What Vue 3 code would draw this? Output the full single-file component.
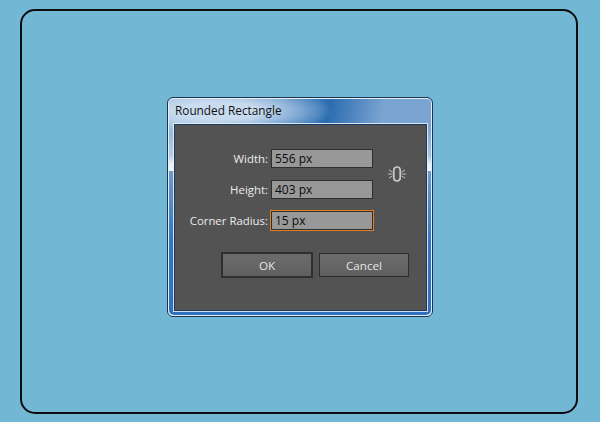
<script setup>
const fields = [
  { label: 'Width:', value: '556 px', active: false },
  { label: 'Height:', value: '403 px', active: false },
  { label: 'Corner Radius:', value: '15 px', active: true },
]
</script>

<template>
  <div class="page">
    <div class="artboard">
      <div class="dialog">
        <div class="title">Rounded Rectangle</div>
        <div class="panel">
          <div class="form">
            <div class="rows">
              <div v-for="f in fields" :key="f.label" class="row">
                <span class="label">{{ f.label }}</span>
                <span class="input" :class="{ active: f.active }">{{ f.value }}</span>
              </div>
            </div>
            <svg class="link" width="18" height="16" viewBox="0 0 18 16" fill="none">
              <rect x="5.8" y="1" width="6.4" height="14" rx="3.2" stroke="#c8c8c8" stroke-width="1.7" />
              <path d="M0 8h4.5M13.5 8h4.5M1 4l3.5 2M17 4l-3.5 2M1 12l3.5-2M17 12l-3.5-2" stroke="#c0c0c0" stroke-width="1" />
            </svg>
          </div>
          <div class="buttons">
            <button class="btn ok">OK</button>
            <button class="btn cancel">Cancel</button>
          </div>
        </div>
      </div>
    </div>
  </div>
</template>

<style>
html, body { margin: 0; background: #72b8d4; }
</style>

<style scoped>
.page {
  width: 600px;
  height: 422px;
  box-sizing: border-box;
  padding: 9px 22px 8px 20px;
  background: #72b8d4;
  font-family: "Open Sans", "Liberation Sans", sans-serif;
  overflow: hidden;
}
.artboard {
  box-sizing: border-box;
  height: 405px;
  border: 2px solid #0d0d10;
  border-radius: 15px;
  padding: 86px 0 0 145px;
}
.dialog {
  box-sizing: border-box;
  width: 266px;
  height: 220px;
  border: 1px solid #1b3550;
  border-radius: 6px;
  padding: 26px 5px 6px 6px;
  background:
    linear-gradient(180deg, rgba(255,255,255,0) 0, rgba(255,255,255,0) 30px, rgba(255,255,255,.35) 58px, rgba(255,255,255,.82) 66px, rgba(255,255,255,.85) 73px),
    radial-gradient(ellipse 115px 24px at 50px 13px, rgba(205,222,240,.95) 35%, rgba(205,222,240,0) 100%),
    linear-gradient(100deg, #8fb5da 0, #8fb5da 12%, #3a78b8 50%, #2b6cb0 54%, #7ba4d2 72%, #7ba4d2 100%);
  position: relative;
  box-shadow: inset 0 0 0 1px #e6eef6;
}
.dialog::after {
  content: "";
  position: absolute;
  left: 1px;
  right: 1px;
  top: 73px;
  bottom: 1px;
  background: linear-gradient(180deg, #6e9acb 0, #3276c2 50%, #2f70bc 100%);
  border-radius: 0 0 5px 5px;
}
.title {
  position: absolute;
  left: 7px;
  top: 3px;
  font-size: 11.8px;
  line-height: 18px;
  color: #111;
  z-index: 1;
}
.panel {
  position: relative;
  z-index: 1;
  box-sizing: border-box;
  height: 187px;
  background: #535353;
  border: 1px solid #1d3a5c;
  box-shadow: 0 0 0 1px rgba(235,242,250,.85);
  padding: 24px 0 0 0;
}
.form {
  display: flex;
  align-items: center;
}
.rows {
  display: flex;
  flex-direction: column;
  gap: 12px;
  width: 198px;
}
.row {
  display: flex;
  justify-content: flex-end;
  align-items: center;
  gap: 3px;
  height: 19px;
}
.label {
  color: #ececec;
  font-size: 11.4px;
  line-height: 19px;
}
.input {
  box-sizing: border-box;
  width: 102px;
  height: 19px;
  background: #989898;
  border: 1px solid #2f2f2f;
  color: #0c0c0c;
  font-size: 12px;
  line-height: 17px;
  padding-left: 3px;
}
.input.active {
  box-shadow: 0 0 0 1px #e07f1f;
}
.link {
  margin: -32px 0 0 15px;
}
.buttons {
  display: flex;
  align-items: center;
  gap: 6px;
  margin: 22px 0 0 46px;
}
.btn {
  box-sizing: border-box;
  height: 24px;
  padding: 0;
  color: #e6e6e6;
  font: 11.6px "Open Sans", "Liberation Sans", sans-serif;
  background: linear-gradient(180deg, #6c6c6c, #5f5f5f);
  border: 1px solid #2e2e2e;
}
.ok {
  width: 92px;
  height: 26px;
  border-width: 2px;
  border-color: #2f2f2f;
}
.cancel {
  width: 90px;
}
</style>
